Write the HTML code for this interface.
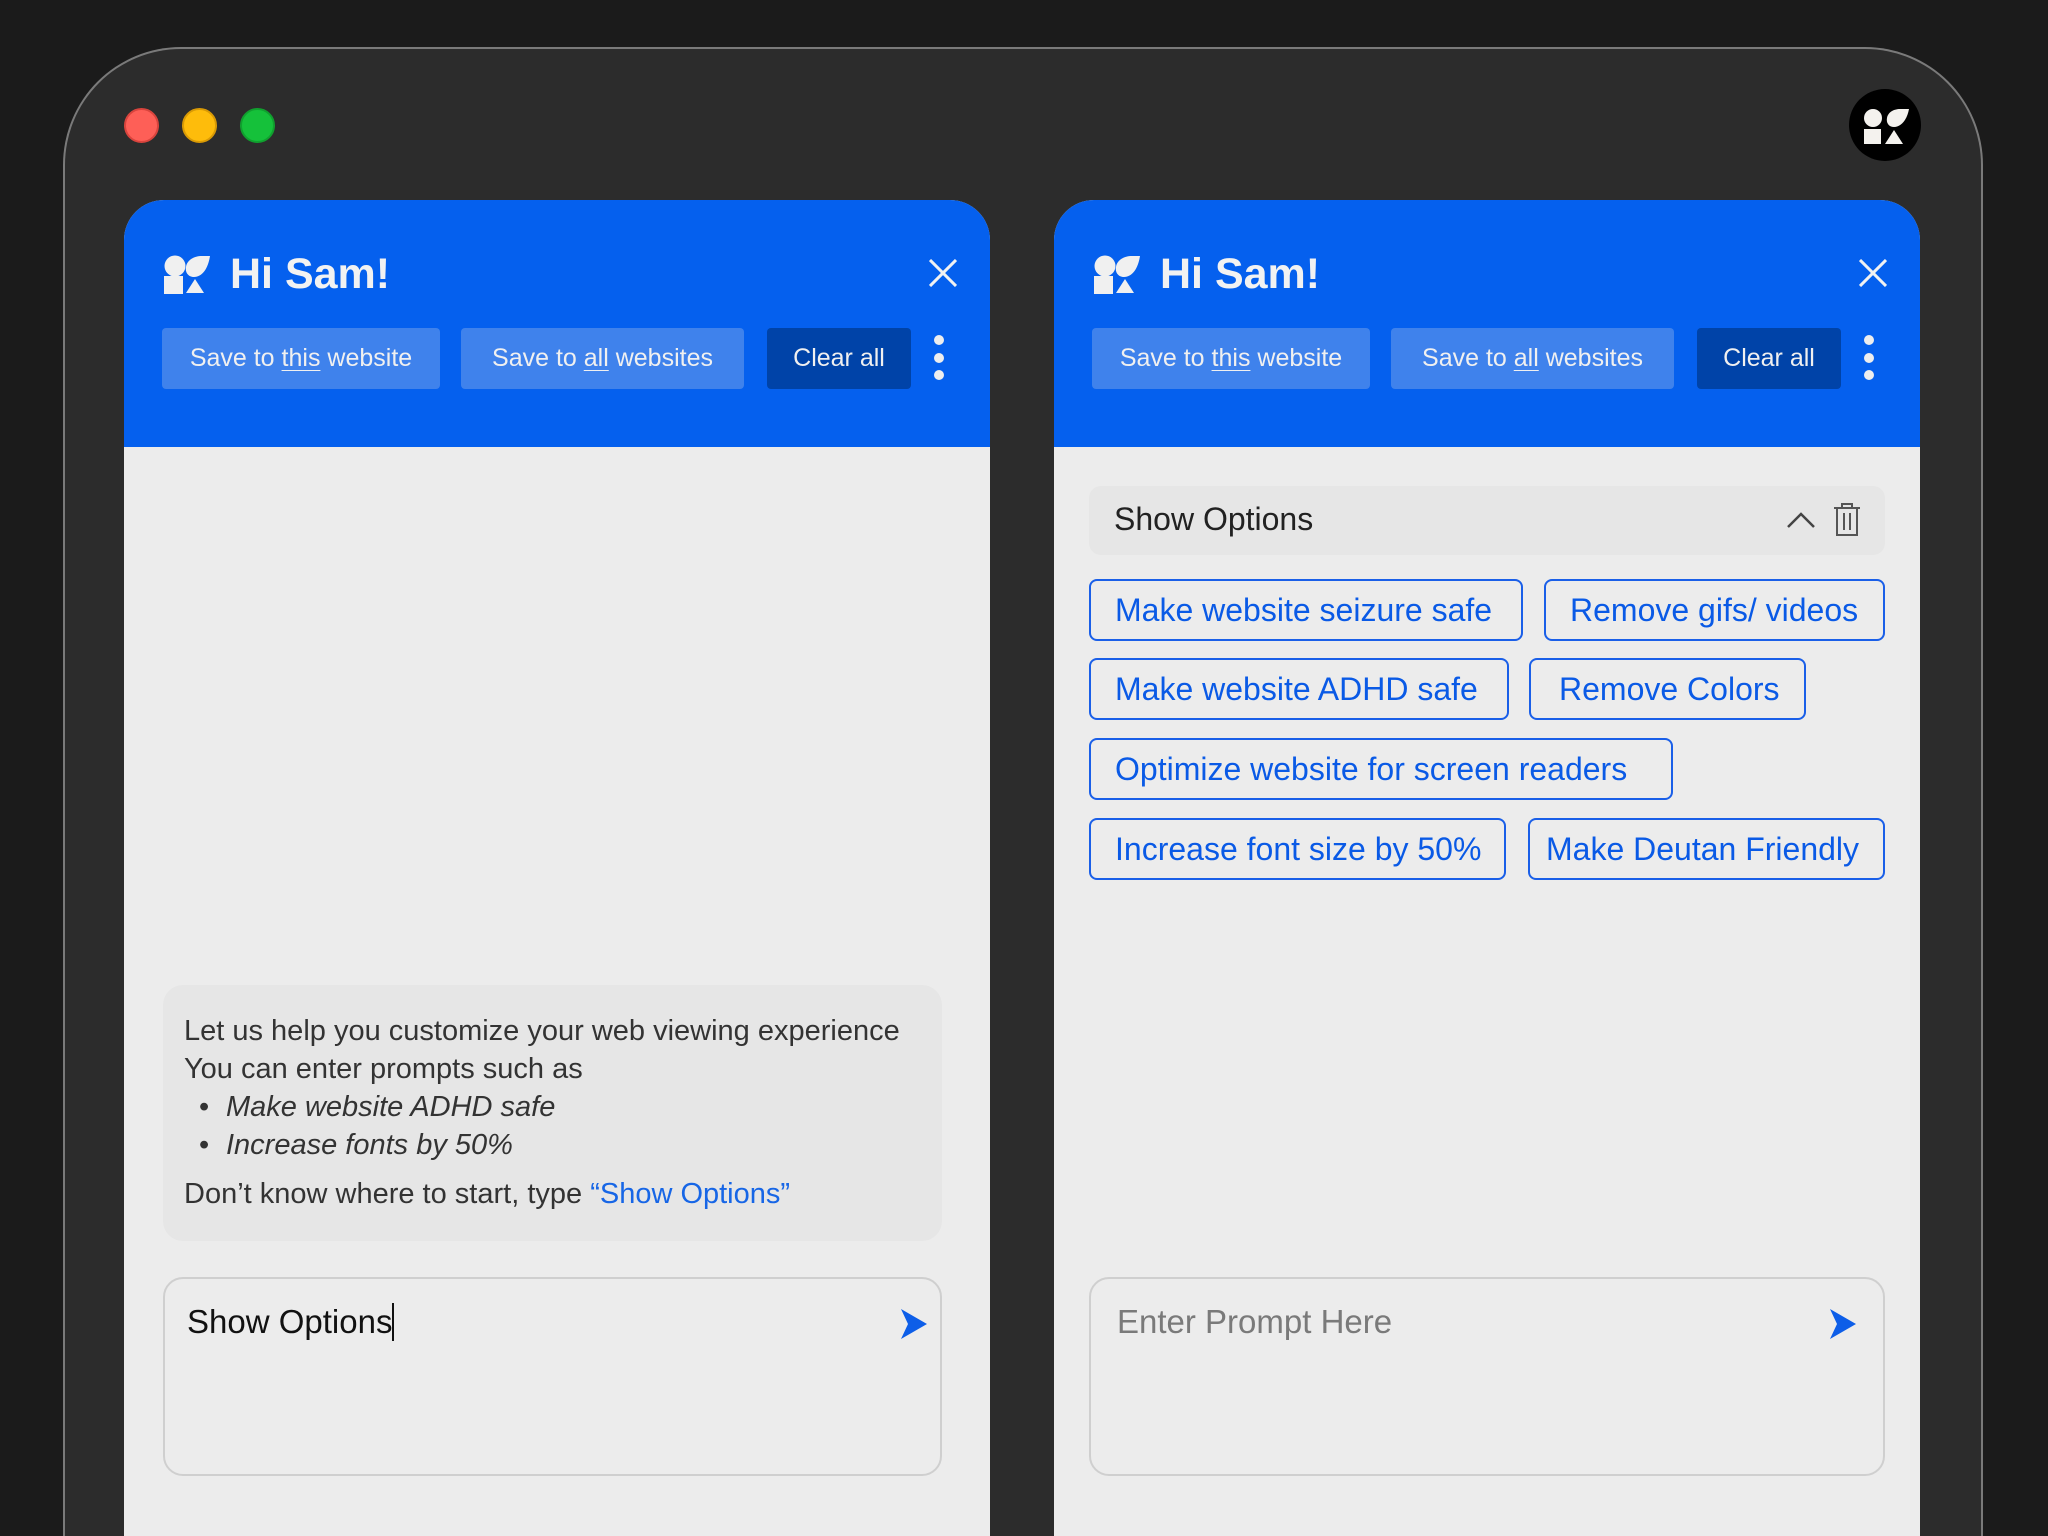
<!DOCTYPE html>
<html><head><meta charset="utf-8"><style>
*{margin:0;padding:0;box-sizing:border-box}
html{width:2048px;height:1536px;overflow:hidden}
body{width:2048px;height:1536px;background:#1b1b1b;position:relative;overflow:hidden;font-family:"Liberation Sans",sans-serif}
.frame{position:absolute;left:63px;top:47px;width:1920px;height:1489px;background:#2c2c2c;border:2px solid #7a7a7a;border-bottom:none;border-radius:118px 118px 0 0}
.dot{position:absolute;width:35px;height:35px;border-radius:50%;top:108px}
.panel{position:absolute;top:200px;width:866px;height:1336px;background:#ececec;border-radius:40px 40px 0 0;overflow:hidden}
.head{position:absolute;left:0;top:0;width:100%;height:247px;background:#0560ee}
.abs{position:absolute}
.hi{position:absolute;left:106px;top:50px;color:#f2f2f2;font-weight:bold;font-size:43px}
.btn{position:absolute;top:128px;height:61px;border-radius:4px;background:#3f82ec;color:#f0f0f0;font-size:25px;line-height:61px;text-align:center}
.btn u{text-decoration-thickness:1px;text-underline-offset:4px}
.clr{background:#0043a8}
.chip{position:absolute;height:62px;border:2px solid #1a5fe8;border-radius:8px;color:#0a5ae6;font-size:32px;line-height:58px;padding-left:24px;white-space:nowrap}
.input{position:absolute;top:1077px;height:199px;border:2px solid #cfcfcf;border-radius:20px;background:#ececec}
</style></head><body>
<div class="frame"></div>
<div class="dot" style="left:124px;background:#fe5f57;border:2px solid #d9443d"></div>
<div class="dot" style="left:182px;background:#febc0b;border:2px solid #d99a05"></div>
<div class="dot" style="left:240px;background:#15c13a;border:2px solid #10a02e"></div>
<svg class="abs" style="left:1849px;top:89px" width="72" height="72" viewBox="0 0 72 72">
<circle cx="36" cy="36" r="36" fill="#000"/>
<circle cx="24" cy="29" r="9" fill="#f4f2ee"/>
<path d="M60 20 C58 31 52 38 45 38 C40 38 37 34 38 29 C39 23 45 20 51 20 Z" fill="#f4f2ee"/>
<rect x="15" y="40" width="17" height="15" fill="#f4f2ee"/>
<path d="M36 55 L45 41 L54 55Z" fill="#f4f2ee"/>
</svg>

<!-- Left panel -->
<div class="panel" style="left:124px">
 <div class="head">
  <svg class="abs" style="left:40px;top:55px" width="47" height="39" viewBox="0 0 47 39">
   <circle cx="11" cy="11" r="10.5" fill="#f0f0f0"/>
   <path d="M46 1 C44 14 38 22 30 22 C24 22 21 17 22 12 C23 5 30 1 38 1 Z" fill="#f0f0f0"/>
   <rect x="0" y="21" width="19" height="18" fill="#f0f0f0"/>
   <path d="M22 38 L31 24 L40 38Z" fill="#f0f0f0"/>
  </svg>
  <div class="hi">Hi Sam!</div>
  <svg class="abs" style="left:805px;top:59px" width="28" height="28" viewBox="0 0 28 28"><path d="M1 1L27 27M27 1L1 27" stroke="#f2f2f2" stroke-width="3"/></svg>
  <div class="btn" style="left:38px;width:278px"><span>Save to <u>this</u> website</span></div>
  <div class="btn" style="left:337px;width:283px">Save to <u>all</u> websites</div>
  <div class="btn clr" style="left:643px;width:144px">Clear all</div>
  <svg class="abs" style="left:809px;top:132px" width="12" height="52"><circle cx="6" cy="8" r="5" fill="#eee"/><circle cx="6" cy="26" r="5" fill="#eee"/><circle cx="6" cy="43" r="5" fill="#eee"/></svg>
 </div>
 <div class="abs" style="left:39px;top:785px;width:779px;height:256px;background:#e6e6e6;border-radius:20px;color:#333;font-size:29px">
  <div class="abs" style="left:21px;top:30px;white-space:nowrap">Let us help you customize your web viewing experience</div>
  <div class="abs" style="left:21px;top:68px;white-space:nowrap">You can enter prompts such as</div>
  <div class="abs" style="left:36px;top:106px">•</div>
  <div class="abs" style="left:63px;top:106px;font-style:italic;white-space:nowrap">Make website ADHD safe</div>
  <div class="abs" style="left:36px;top:144px">•</div>
  <div class="abs" style="left:63px;top:144px;font-style:italic;white-space:nowrap">Increase fonts by 50%</div>
  <div class="abs" style="left:21px;top:193px;white-space:nowrap">Don’t know where to start, type <span style="color:#1766e6">“Show Options”</span></div>
 </div>
 <div class="input" style="left:39px;width:779px">
  <div class="abs" style="left:22px;top:24px;font-size:33px;color:#111;white-space:nowrap">Show Options<span style="display:inline-block;width:2px;height:38px;background:#111;vertical-align:-8px"></span></div>
  <svg class="abs" style="left:735px;top:29px" width="28" height="32" viewBox="0 0 28 32"><path d="M1 1L27 16L1 31L8 16Z" fill="#0d5ee8"/></svg>
 </div>
</div>

<!-- Right panel -->
<div class="panel" style="left:1054px">
 <div class="head">
  <svg class="abs" style="left:40px;top:55px" width="47" height="39" viewBox="0 0 47 39">
   <circle cx="11" cy="11" r="10.5" fill="#f0f0f0"/>
   <path d="M46 1 C44 14 38 22 30 22 C24 22 21 17 22 12 C23 5 30 1 38 1 Z" fill="#f0f0f0"/>
   <rect x="0" y="21" width="19" height="18" fill="#f0f0f0"/>
   <path d="M22 38 L31 24 L40 38Z" fill="#f0f0f0"/>
  </svg>
  <div class="hi">Hi Sam!</div>
  <svg class="abs" style="left:805px;top:59px" width="28" height="28" viewBox="0 0 28 28"><path d="M1 1L27 27M27 1L1 27" stroke="#f2f2f2" stroke-width="3"/></svg>
  <div class="btn" style="left:38px;width:278px">Save to <u>this</u> website</div>
  <div class="btn" style="left:337px;width:283px">Save to <u>all</u> websites</div>
  <div class="btn clr" style="left:643px;width:144px">Clear all</div>
  <svg class="abs" style="left:809px;top:132px" width="12" height="52"><circle cx="6" cy="8" r="5" fill="#eee"/><circle cx="6" cy="26" r="5" fill="#eee"/><circle cx="6" cy="43" r="5" fill="#eee"/></svg>
 </div>
 <div class="abs" style="left:35px;top:286px;width:796px;height:69px;background:#e6e6e6;border-radius:12px">
  <div class="abs" style="left:25px;top:15px;font-size:32px;color:#222">Show Options</div>
  <svg class="abs" style="left:697px;top:24px" width="30" height="20" viewBox="0 0 30 20"><path d="M2 17L15 4L28 17" stroke="#444" stroke-width="2.5" fill="none"/></svg>
  <svg class="abs" style="left:743px;top:16px" width="30" height="35" viewBox="0 0 30 35"><path d="M2 6H28M10 6V2H20V6M5 6V33H25V6M12 11V28M18 11V28" stroke="#555" stroke-width="2" fill="none"/></svg>
 </div>
 <div class="chip" style="left:35px;top:379px;width:434px">Make website seizure safe</div>
 <div class="chip" style="left:490px;top:379px;width:341px">Remove gifs/ videos</div>
 <div class="chip" style="left:35px;top:458px;width:420px">Make website ADHD safe</div>
 <div class="chip" style="left:475px;top:458px;width:277px;padding-left:28px">Remove Colors</div>
 <div class="chip" style="left:35px;top:538px;width:584px">Optimize website for screen readers</div>
 <div class="chip" style="left:35px;top:618px;width:417px">Increase font size by 50%</div>
 <div class="chip" style="left:474px;top:618px;width:357px;padding-left:16px">Make Deutan Friendly</div>
 <div class="input" style="left:35px;width:796px">
  <div class="abs" style="left:26px;top:24px;font-size:33px;color:#7a7a7a;white-space:nowrap">Enter Prompt Here</div>
  <svg class="abs" style="left:738px;top:29px" width="28" height="32" viewBox="0 0 28 32"><path d="M1 1L27 16L1 31L8 16Z" fill="#0d5ee8"/></svg>
 </div>
</div>
</body></html>
